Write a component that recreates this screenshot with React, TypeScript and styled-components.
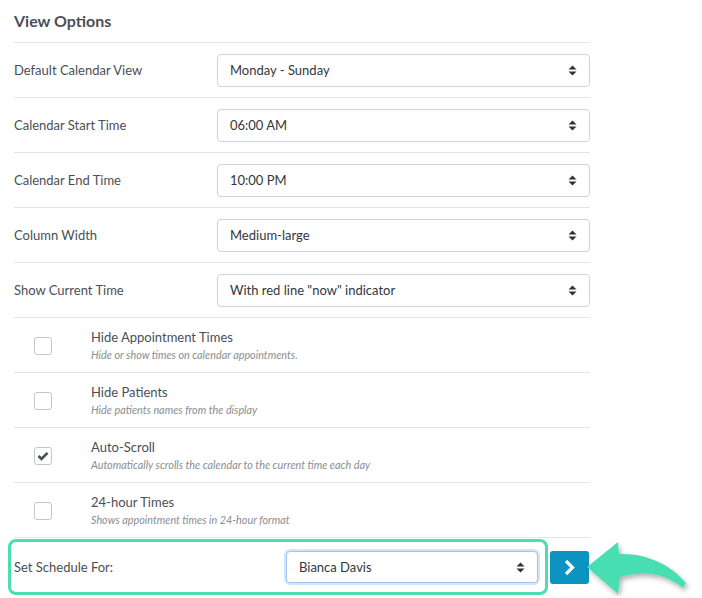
import React from "react";
import styled, { createGlobalStyle } from "styled-components";

const GlobalStyle = createGlobalStyle`
  body {
    margin: 0;
    background: #fff;
    font-family: Lato, "Liberation Sans", sans-serif;
    color: #4a4f55;
  }
`;

const selects = [
  { label: "Default Calendar View", value: "Monday - Sunday" },
  { label: "Calendar Start Time", value: "06:00 AM" },
  { label: "Calendar End Time", value: "10:00 PM" },
  { label: "Column Width", value: "Medium-large" },
  { label: "Show Current Time", value: 'With red line "now" indicator' },
];

const checks = [
  { title: "Hide Appointment Times", desc: "Hide or show times on calendar appointments.", checked: false },
  { title: "Hide Patients", desc: "Hide patients names from the display", checked: false },
  { title: "Auto-Scroll", desc: "Automatically scrolls the calendar to the current time each day", checked: true },
  { title: "24-hour Times", desc: "Shows appointment times in 24-hour format", checked: false },
];

const SortIcon: React.FC = () => (
  <svg width="9" height="11" viewBox="0 0 9 11">
    <path d="M0.5 4.5 L4.5 0.5 L8.5 4.5 Z" fill="#2f3338" />
    <path d="M0.5 6.5 L4.5 10.5 L8.5 6.5 Z" fill="#2f3338" />
  </svg>
);

const App: React.FC = () => {
  return (
    <Page>
      <GlobalStyle />
      <Title>View Options</Title>
      {selects.map((s) => (
        <Row key={s.label}>
          <Label>{s.label}</Label>
          <Select>
            <span>{s.value}</span>
            <SortIcon />
          </Select>
        </Row>
      ))}
      {checks.map((c) => (
        <Row key={c.title}>
          <Checkbox>
            {c.checked && (
              <svg width="12" height="10" viewBox="0 0 12 10">
                <path d="M1.5 5 L4.5 8 L10.5 1.8" fill="none" stroke="#4a4f55" strokeWidth="2.6" />
              </svg>
            )}
          </Checkbox>
          <CheckText>
            <CheckTitle>{c.title}</CheckTitle>
            <CheckDesc>{c.desc}</CheckDesc>
          </CheckText>
        </Row>
      ))}
      <ScheduleRow>
        <Highlight>
          <Label>Set Schedule For:</Label>
          <Select $focused>
            <span>Bianca Davis</span>
            <SortIcon />
          </Select>
        </Highlight>
        <GoButton>
          <svg width="13" height="17" viewBox="0 0 13 17">
            <path d="M3 2 L9.5 8.5 L3 15" fill="none" stroke="#fff" strokeWidth="3.2" />
          </svg>
        </GoButton>
        <Arrow width="120" height="64" viewBox="580 535 120 64">
          <defs>
            <filter id="sh" x="-20%" y="-20%" width="150%" height="160%">
              <feDropShadow dx="2" dy="3" stdDeviation="2.5" floodColor="#000" floodOpacity="0.3" />
            </filter>
          </defs>
          <path
            d="M587 566 L618 541 L619 553 C646 552 670 563 686 582 L683 587 C664 572 644 569 620 576 L618 593 Z"
            fill="#4adeb1"
            filter="url(#sh)"
          />
        </Arrow>
      </ScheduleRow>
    </Page>
  );
};

export default App;

const Page = styled.div`
  width: 576px;
  padding: 7px 0 0 14px;
  position: relative;
`;

const Title = styled.h2`
  margin: 0;
  font-size: 16px;
  font-weight: 700;
  line-height: 28px;
  height: 35px;
  color: #4a4f55;
  border-bottom: 1px solid #e3e5e7;
`;

const Row = styled.div`
  display: flex;
  align-items: center;
  height: 54px;
  border-bottom: 1px solid #e3e5e7;
`;

const Label = styled.div`
  flex: 1;
  font-size: 13px;
  color: #4a4f55;
`;

const Select = styled.div<{ $focused?: boolean }>`
  box-sizing: border-box;
  width: ${(p) => (p.$focused ? "252px" : "373px")};
  height: ${(p) => (p.$focused ? "32px" : "33px")};
  display: flex;
  align-items: center;
  justify-content: space-between;
  padding: 0 12px 0 12px;
  font-size: 13px;
  color: #33373b;
  background: #fff;
  border: 1px solid ${(p) => (p.$focused ? "#9fc4f3" : "#cfd4d9")};
  border-radius: 4px;
  box-shadow: ${(p) => (p.$focused ? "0 0 0 2px #d3e4fb" : "none")};
`;

const Checkbox = styled.div`
  box-sizing: border-box;
  width: 18px;
  height: 18px;
  margin-left: 20px;
  margin-top: 2px;
  border: 1px solid #c3c7cb;
  border-radius: 3px;
  display: flex;
  align-items: center;
  justify-content: center;
`;

const CheckText = styled.div`
  margin-left: 39px;
`;

const CheckTitle = styled.div`
  font-size: 13px;
  line-height: 16px;
  color: #4a4f55;
`;

const CheckDesc = styled.div`
  margin-top: 3px;
  font-size: 10.8px;
  line-height: 14px;
  font-style: italic;
  color: #8a8e92;
`;

const ScheduleRow = styled.div`
  display: flex;
  align-items: center;
  height: 58px;
  position: relative;
`;

const Highlight = styled.div`
  box-sizing: border-box;
  display: flex;
  align-items: center;
  width: 540px;
  height: 56px;
  margin-left: -6px;
  padding: 0 7px 0 3px;
  border: 3px solid #4adeb1;
  border-radius: 8px;
`;

const GoButton = styled.div`
  width: 39px;
  height: 33px;
  margin-left: 2px;
  background: #0b93c1;
  border-radius: 3px;
  display: flex;
  align-items: center;
  justify-content: center;
`;

const Arrow = styled.svg`
  position: absolute;
  left: 566px;
  top: -2px;
  overflow: visible;
`;
